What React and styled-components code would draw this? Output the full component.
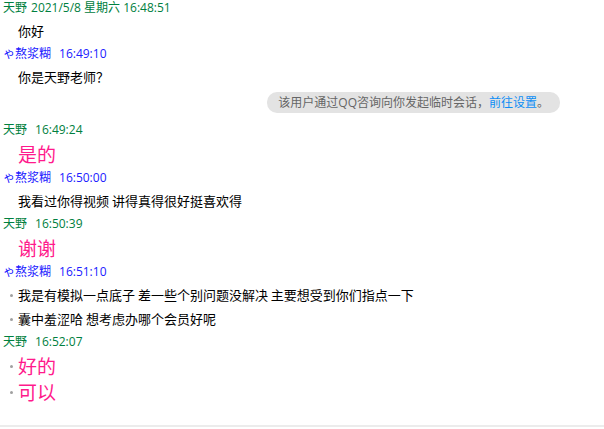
import styled, { createGlobalStyle } from "styled-components";

const GlobalStyle = createGlobalStyle`
  html, body {
    margin: 0;
    padding: 0;
    background: #fff;
  }
  body {
    font-family: "Open Sans", "Noto Sans CJK SC", sans-serif;
  }
`;

const Container = styled.div`
  height: 425px;
  border-bottom: 2px solid #ececec;
  overflow: hidden;
`;

const Header = styled.div`
  font-size: 12px;
  line-height: 16px;
  margin: ${(p) => (p.first ? "0" : "3px")} 0 3px 3px;
  color: ${(p) => (p.self ? "#008040" : "#2020ff")};
  white-space: nowrap;
`;

const Time = styled.span`
  margin-left: ${(p) => (p.gap ? "8px" : "4px")};
`;

const Message = styled.div`
  position: relative;
  padding-left: 18px;
  font-size: ${(p) => (p.big ? "19px" : "13px")};
  line-height: ${(p) => (p.big ? "26px" : "24px")};
  color: ${(p) => (p.big ? "#ff1a8c" : "#000")};
  font-family: "Noto Sans CJK SC", sans-serif;
  white-space: nowrap;

  &::before {
    content: "";
    display: ${(p) => (p.dot ? "block" : "none")};
    position: absolute;
    left: 10px;
    top: 50%;
    margin-top: -1px;
    width: 3px;
    height: 3px;
    border-radius: 50%;
    background: #a0a0a0;
  }
`;

const NoticeRow = styled.div`
  display: flex;
  justify-content: flex-end;
  padding-right: 44px;
  margin: 3px 0 9px;
`;

const Notice = styled.div`
  height: 21px;
  line-height: 21px;
  padding: 0 11px;
  border-radius: 10px;
  background: #e3e3e3;
  color: #666;
  font-size: 12px;
  white-space: nowrap;
`;

const Link = styled.span`
  color: #0d8ef5;
`;

const ME = "天野";
const OTHER = "ゃ熬浆糊";

const Entry = ({ self, time, gap = true, first, children }) => (
  <>
    <Header self={self} first={first}>
      {self ? ME : OTHER}
      <Time gap={gap}>{time}</Time>
    </Header>
    {children}
  </>
);

const App = () => {
  return (
    <Container>
      <GlobalStyle />
      <Entry self first gap={false} time="2021/5/8 星期六 16:48:51">
        <Message>你好</Message>
      </Entry>
      <Entry time="16:49:10">
        <Message>你是天野老师？</Message>
      </Entry>
      <NoticeRow>
        <Notice>
          该用户通过QQ咨询向你发起临时会话，<Link>前往设置</Link>。
        </Notice>
      </NoticeRow>
      <Entry self time="16:49:24">
        <Message big>是的</Message>
      </Entry>
      <Entry time="16:50:00">
        <Message>我看过你得视频 讲得真得很好挺喜欢得</Message>
      </Entry>
      <Entry self time="16:50:39">
        <Message big>谢谢</Message>
      </Entry>
      <Entry time="16:51:10">
        <Message dot>我是有模拟一点底子 差一些个别问题没解决 主要想受到你们指点一下</Message>
        <Message dot>囊中羞涩哈 想考虑办哪个会员好呢</Message>
      </Entry>
      <Entry self time="16:52:07">
        <Message big dot>好的</Message>
        <Message big dot>可以</Message>
      </Entry>
    </Container>
  );
};

export default App;
